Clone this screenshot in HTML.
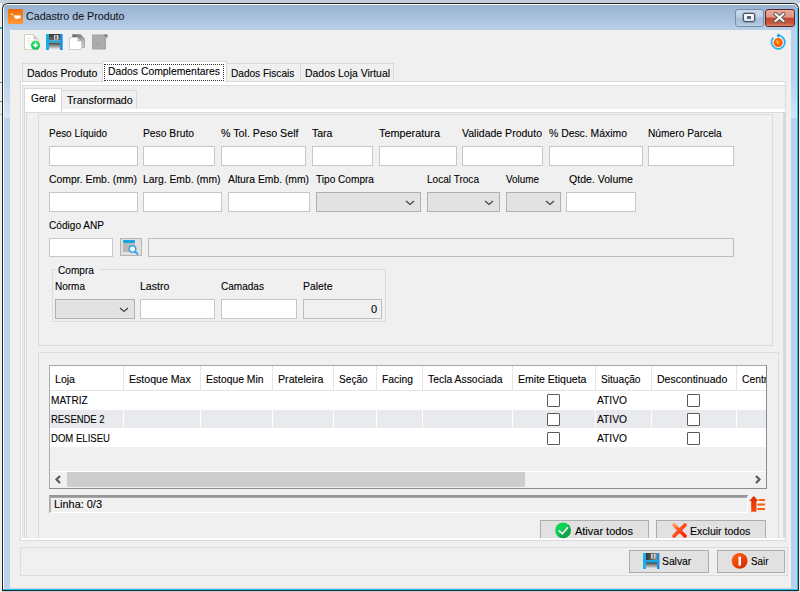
<!DOCTYPE html>
<html><head><meta charset="utf-8">
<style>
*{margin:0;padding:0;box-sizing:border-box}
html,body{width:800px;height:592px;overflow:hidden;background:#c3cfdb;font-family:"Liberation Sans",sans-serif;font-size:11px;color:#000}
.a{position:absolute}
.s{display:inline-block;transform-origin:0 0}
.lbl{position:absolute;white-space:nowrap;font-size:11px;line-height:13px;color:#000;-webkit-text-stroke:0.1px #000}
.ed{position:absolute;background:#fff;border:1px solid #c3c6cb}
.cb{position:absolute;background:#e2e2e2;border:1px solid #adb0b5}
.cb svg{position:absolute;right:5px;top:7px}
.dis{position:absolute;background:#f0f0f0;border:1px solid #bcbec2}
.btn{position:absolute;background:#e1e1e1;border:1px solid #adadad}
.tab{position:absolute;background:#f0f0f0;border:1px solid #d9d9d9;border-bottom:none}
.gb{position:absolute;border:1px solid #dcdcdc}
.hd{position:absolute;top:0;height:25px;-webkit-text-stroke:0.1px #000;border-right:1px solid #e5e5e5;padding-left:5px;line-height:26px;white-space:nowrap;overflow:hidden}
.row{position:absolute;left:0;width:716px;height:18px}
.ck{position:absolute;width:13px;height:13px;border:1.5px solid #5a5a5a;border-radius:1px;background:#fff}
</style></head><body>

<!-- left/right outside strips -->
<div class="a" style="left:0;top:0;width:2px;height:592px;background:#eef0f2"></div>
<div class="a" style="left:798px;top:0;width:2px;height:592px;background:#eef0f2"></div>
<div class="a" style="left:0;top:0;width:800px;height:3px;background:#c3cfdb"></div>

<!-- window frame -->
<div class="a" style="left:2px;top:3px;width:797px;height:588px;background:#262626;border-radius:6px 6px 0 0"></div>
<div class="a" style="left:3px;top:4px;width:795px;height:586px;background:#fff;border-radius:5px 5px 0 0"></div>
<div class="a" style="left:4px;top:5px;width:793px;height:584px;background:#b9d1ea;border-radius:4px 4px 0 0"></div><div class="a" style="left:4px;top:588px;width:793px;height:1px;background:#c9d0ea"></div>
<div class="a" style="left:4px;top:5px;width:793px;height:25px;background:linear-gradient(#97b1d0,#b8d0e8);border-radius:4px 4px 0 0"></div>
<div class="a" style="left:3px;top:589px;width:795px;height:1px;background:#1fc6f0"></div>
<div class="a" style="left:797px;top:8px;width:1px;height:582px;background:#1fc6f0"></div>

<div class="a" style="left:4px;top:80px;width:6px;height:38px;background:linear-gradient(#b9d1ea,#d6e4f3)"></div>
<div class="a" style="left:791px;top:80px;width:6px;height:38px;background:linear-gradient(#b9d1ea,#d6e4f3)"></div>
<div class="a" style="left:0;top:27px;width:2px;height:2px;background:#2ab0e0"></div>
<div class="a" style="left:0;top:82px;width:2px;height:1px;background:#888"></div>
<div class="a" style="left:0;top:101px;width:2px;height:1px;background:#888"></div>
<div class="a" style="left:0;top:114px;width:2px;height:1px;background:#bbb"></div>
<!-- title -->
<div class="a" style="left:8px;top:9px;width:15px;height:15px;background:linear-gradient(#f06c00,#ff9838);border-radius:1.5px"></div>
<svg class="a" style="left:8px;top:9px" width="15" height="15"><ellipse cx="3.8" cy="5.3" rx="1.2" ry="0.8" fill="#fff" opacity="0.85"/><path d="M5.2 6.2 L12.4 6.6 L13 8.6 L11.2 9.6 L8.2 9.9 L7.2 9.6 Z" fill="#fff"/></svg>
<div class="lbl" style="left:26px;top:9px;font-size:11.5px;line-height:14px;color:#1a1a2a"><span class="s" style="transform:scaleX(0.928)">Cadastro de Produto</span></div>

<!-- caption buttons -->
<div class="a" style="left:735px;top:9px;width:29px;height:18px;border:1px solid #7b8ba3;border-radius:3px;background:linear-gradient(#c8d9ed 0%,#bcd0e8 45%,#a6bdd9 50%,#b0c7e1 90%,#c5d7ec 100%)"></div>
<div class="a" style="left:743px;top:13px;width:12px;height:9px;border:1px solid #4a5060;border-radius:2px;background:linear-gradient(#fff,#dde4ee);box-shadow:0 0 0 1px rgba(80,90,110,.35)"></div><div class="a" style="left:747px;top:16px;width:4px;height:3px;background:#58647a"></div>
<div class="a" style="left:765px;top:9px;width:30px;height:18px;border:1px solid #5e2230;border-radius:3px;background:linear-gradient(#eaa898 0%,#e09484 45%,#c2472c 50%,#c85a40 85%,#dc8a74 100%)"></div>
<svg class="a" style="left:773px;top:12px" width="13" height="11"><path d="M2.5 2 L10.5 9 M10.5 2 L2.5 9" stroke="#555" stroke-width="4" stroke-linecap="round"/><path d="M2.5 2 L10.5 9 M10.5 2 L2.5 9" stroke="#f4f4f4" stroke-width="2.3" stroke-linecap="round"/></svg>

<!-- client -->
<div class="a" style="left:10px;top:30px;width:781px;height:558px;background:#f0f0f0"></div>

<!-- toolbar icons -->
<svg class="a" style="left:23px;top:33px" width="88" height="18">
<defs>
<linearGradient id="sv1" x1="0" y1="0" x2="0" y2="1"><stop offset="0" stop-color="#3a3a3a"/><stop offset="1" stop-color="#6a6a6a"/></linearGradient>
<linearGradient id="sv2" x1="0" y1="0" x2="0" y2="1"><stop offset="0" stop-color="#3c3c3c"/><stop offset="1" stop-color="#f0f0f0"/></linearGradient>
<linearGradient id="gr1" x1="0" y1="0" x2="0" y2="1"><stop offset="0" stop-color="#30e070"/><stop offset="1" stop-color="#10c050"/></linearGradient>
</defs>
<!-- new doc -->
<path d="M1.5 1.5 H10.5 L15.5 6.5 V16.5 H1.5 Z" fill="#fff" stroke="#d6d2b6" stroke-width="1"/>
<path d="M10.5 1.5 L15.5 6.5 H10.5 Z" fill="#cfcfcf"/>
<path d="M4 5 H8 M4 8 H11 M4 11 H8" stroke="#e4e4e4" stroke-width="1"/>
<circle cx="12.5" cy="12.2" r="4.6" fill="url(#gr1)"/>
<path d="M12.5 9.8 V14.6 M10.1 12.2 H14.9" stroke="#fff" stroke-width="1.6"/>
<!-- save -->
<rect x="26" y="1" width="11" height="6.5" fill="url(#sv1)"/>
<rect x="31" y="2" width="4.5" height="4.5" fill="#d8d8d8"/>
<rect x="32" y="2.5" width="2" height="3.5" fill="#777"/>
<rect x="26" y="9.5" width="11" height="7" fill="url(#sv2)"/>
<rect x="23" y="1" width="3" height="16" fill="#18aee6"/>
<rect x="37" y="1" width="2.6" height="16" fill="#168ee0"/>
<rect x="23" y="7.5" width="16.6" height="2" fill="#1aa6e6"/>
<!-- copy -->
<linearGradient id="cp" x1="0" y1="0" x2="1" y2="1"><stop offset="0" stop-color="#5e5e5e"/><stop offset="0.6" stop-color="#a8a8a8"/><stop offset="1" stop-color="#d4d4d4"/></linearGradient><path d="M49.5 1.5 H57.5 L61.5 5.5 V14.5 H49.5 Z" fill="url(#cp)" stroke="#8a8a8a" stroke-width="0.6"/>
<path d="M46.5 4.5 H54.5 L58.5 8.5 V16.5 H46.5 Z" fill="#fff" stroke="#cfcfcf" stroke-width="1"/>
<path d="M54.5 4.5 L58.5 8.5 H54.5 Z" fill="#bbb"/>
<!-- edit disabled -->
<rect x="69" y="1.5" width="14" height="15" fill="#a4a4a4"/>
<rect x="70" y="2.5" width="12" height="13" fill="#acacac"/>
<path d="M80 2 L83.5 1 L85 2.5 L84 5 Z" fill="#8a8a8a"/>
<path d="M74 9 L76 12" stroke="#959595" stroke-width="1"/>
</svg>

<!-- power icon -->
<svg class="a" style="left:769px;top:33px" width="18" height="18">
<defs><radialGradient id="org" cx="0.45" cy="0.4" r="0.6"><stop offset="0" stop-color="#ff8a10"/><stop offset="1" stop-color="#ff4a00"/></radialGradient></defs>
<path d="M4.3 4.6 A6.7 6.7 0 1 0 9.2 2.5" fill="none" stroke="#22b4ec" stroke-width="1.7"/>
<path d="M9.4 0.6 L11.6 2.6 L9.4 4.8 L7.6 2.6 Z" fill="#1a9ee4"/>
<circle cx="9.2" cy="9.5" r="4.5" fill="url(#org)"/>
<path d="M8 7 Q7.6 10 10 11" fill="none" stroke="#ffc040" stroke-width="1.1"/>
</svg>

<!-- main tabs -->
<div class="tab" style="left:22px;top:63px;width:81px;height:18px"></div>
<div class="lbl" style="left:27px;top:67px"><span class="s" style="transform:scaleX(0.959)">Dados Produto</span></div>
<div class="tab" style="left:226px;top:63px;width:75px;height:18px"></div>
<div class="lbl" style="left:231px;top:67px"><span class="s" style="transform:scaleX(0.916)">Dados Fiscais</span></div>
<div class="tab" style="left:300px;top:63px;width:94px;height:18px"></div>
<div class="lbl" style="left:305px;top:67px"><span class="s" style="transform:scaleX(0.948)">Dados Loja Virtual</span></div>

<!-- main panel -->
<div class="a" style="left:20px;top:81px;width:766px;height:460px;border:1px solid #d9d9d9;background:#fff"></div>
<div class="tab" style="left:102px;top:61px;width:125px;height:22px;background:#fff"></div>
<div class="a" style="left:104px;top:64px;width:120px;height:17px;border:1px dotted #333"></div>
<div class="lbl" style="left:108px;top:65px"><span class="s" style="transform:scaleX(0.944)">Dados Complementares</span></div>

<div class="a" style="left:22px;top:85px;width:763px;height:453px;border:1px solid #dcdcdc;border-right:none;border-bottom:none;background:#f0f0f0"></div>

<!-- inner tabs -->
<div class="a" style="left:24px;top:112px;width:761px;height:426px;border:1px solid #dadada;border-bottom:none;background:#f0f0f0"></div>
<div class="a" style="left:24px;top:109px;width:761px;height:3px;background:#fff;border-left:1px solid #dadada"></div>
<div class="tab" style="left:61px;top:90px;width:76px;height:19px"></div>
<div class="lbl" style="left:67px;top:94px"><span class="s" style="transform:scaleX(0.965)">Transformado</span></div>
<div class="tab" style="left:24px;top:88px;width:38px;height:24px;background:#fff"></div>
<div class="lbl" style="left:31px;top:92px"><span class="s" style="transform:scaleX(0.922)">Geral</span></div>

<div class="a" style="left:26px;top:112px;width:758px;height:426px;border:1px solid #dadada;border-bottom:none;background:#f0f0f0"></div>

<!-- group 1 -->
<div class="gb" style="left:38px;top:114px;width:735px;height:232px"></div>

<div class="lbl" style="left:49px;top:127px"><span class="s" style="transform:scaleX(0.903)">Peso Líquido</span></div>
<div class="lbl" style="left:143px;top:127px"><span class="s" style="transform:scaleX(0.937)">Peso Bruto</span></div>
<div class="lbl" style="left:221px;top:127px"><span class="s" style="transform:scaleX(0.970)">% Tol. Peso Self</span></div>
<div class="lbl" style="left:312px;top:127px"><span class="s" style="transform:scaleX(0.957)">Tara</span></div>
<div class="lbl" style="left:379px;top:127px"><span class="s" style="transform:scaleX(0.988)">Temperatura</span></div>
<div class="lbl" style="left:462px;top:127px"><span class="s" style="transform:scaleX(0.957)">Validade Produto</span></div>
<div class="lbl" style="left:549px;top:127px"><span class="s" style="transform:scaleX(0.945)">% Desc. Máximo</span></div>
<div class="lbl" style="left:648px;top:127px"><span class="s" style="transform:scaleX(0.928)">Número Parcela</span></div>

<div class="ed" style="left:49px;top:146px;width:89px;height:20px"></div>
<div class="ed" style="left:143px;top:146px;width:72px;height:20px"></div>
<div class="ed" style="left:221px;top:146px;width:85px;height:20px"></div>
<div class="ed" style="left:312px;top:146px;width:61px;height:20px"></div>
<div class="ed" style="left:379px;top:146px;width:78px;height:20px"></div>
<div class="ed" style="left:462px;top:146px;width:81px;height:20px"></div>
<div class="ed" style="left:549px;top:146px;width:94px;height:20px"></div>
<div class="ed" style="left:648px;top:146px;width:86px;height:20px"></div>

<div class="lbl" style="left:49px;top:173px"><span class="s" style="transform:scaleX(0.947)">Compr. Emb. (mm)</span></div>
<div class="lbl" style="left:143px;top:173px"><span class="s" style="transform:scaleX(0.939)">Larg. Emb. (mm)</span></div>
<div class="lbl" style="left:228px;top:173px"><span class="s" style="transform:scaleX(0.940)">Altura Emb. (mm)</span></div>
<div class="lbl" style="left:316px;top:173px"><span class="s" style="transform:scaleX(0.918)">Tipo Compra</span></div>
<div class="lbl" style="left:427px;top:173px"><span class="s" style="transform:scaleX(0.914)">Local Troca</span></div>
<div class="lbl" style="left:506px;top:173px"><span class="s" style="transform:scaleX(0.899)">Volume</span></div>
<div class="lbl" style="left:569px;top:173px"><span class="s" style="transform:scaleX(0.960)">Qtde. Volume</span></div>

<div class="ed" style="left:49px;top:192px;width:89px;height:20px"></div>
<div class="ed" style="left:143px;top:192px;width:79px;height:20px"></div>
<div class="ed" style="left:228px;top:192px;width:82px;height:20px"></div>
<div class="cb" style="left:316px;top:192px;width:105px;height:20px"><svg width="10" height="6"><path d="M1 1 L5 4.5 L9 1" fill="none" stroke="#444" stroke-width="1.2"/></svg></div>
<div class="cb" style="left:427px;top:192px;width:73px;height:20px"><svg width="10" height="6"><path d="M1 1 L5 4.5 L9 1" fill="none" stroke="#444" stroke-width="1.2"/></svg></div>
<div class="cb" style="left:506px;top:192px;width:55px;height:20px"><svg width="10" height="6"><path d="M1 1 L5 4.5 L9 1" fill="none" stroke="#444" stroke-width="1.2"/></svg></div>
<div class="ed" style="left:566px;top:192px;width:70px;height:20px"></div>

<div class="lbl" style="left:49px;top:219px"><span class="s" style="transform:scaleX(0.918)">Código ANP</span></div>
<div class="ed" style="left:49px;top:238px;width:64px;height:19px"></div>
<div class="btn" style="left:120px;top:238px;width:22px;height:18px;background:#e1e1e1;border-color:#b4b4b4"></div>
<svg class="a" style="left:121px;top:239px" width="20" height="18">
<rect x="2" y="1" width="12" height="3" rx="1" fill="#14a4e4"/>
<rect x="2" y="4" width="12" height="9" fill="#b8b8b8"/>
<circle cx="11.5" cy="10" r="3.3" fill="#fff" stroke="#3aa6e6" stroke-width="1.6"/>
<path d="M14 12.5 L17 15.5" stroke="#3aa6e6" stroke-width="2"/>
</svg>
<div class="dis" style="left:148px;top:238px;width:586px;height:19px"></div>

<!-- compra group -->
<div class="gb" style="left:52px;top:269px;width:334px;height:53px"></div>
<div class="lbl" style="left:56px;top:264px;background:#f0f0f0;padding:0 2px"><span class="s" style="transform:scaleX(0.920)">Compra</span></div>
<div class="lbl" style="left:55px;top:280px"><span class="s" style="transform:scaleX(0.909)">Norma</span></div>
<div class="lbl" style="left:140px;top:280px"><span class="s" style="transform:scaleX(0.957)">Lastro</span></div>
<div class="lbl" style="left:221px;top:280px"><span class="s" style="transform:scaleX(0.913)">Camadas</span></div>
<div class="lbl" style="left:303px;top:280px"><span class="s" style="transform:scaleX(0.946)">Palete</span></div>
<div class="cb" style="left:55px;top:299px;width:80px;height:20px"><svg width="10" height="6"><path d="M1 1 L5 4.5 L9 1" fill="none" stroke="#444" stroke-width="1.2"/></svg></div>
<div class="ed" style="left:140px;top:299px;width:75px;height:20px"></div>
<div class="ed" style="left:221px;top:299px;width:76px;height:20px"></div>
<div class="dis" style="left:303px;top:299px;width:79px;height:20px"><div class="lbl" style="right:4px;top:3px"><span class="s" style="transform:scaleX(1.000)">0</span></div></div>

<!-- group 2 -->
<div class="gb" style="left:38px;top:352px;width:741px;height:186px;border-bottom:none"></div>

<!-- grid -->
<div class="a" style="left:49px;top:365px;width:718px;height:124px;border:1px solid #868a92;border-top-color:#a3a7ae;border-left-color:#a9adb4;background:#f0f0f0;overflow:hidden">
  <div class="a" style="left:0;top:0;width:716px;height:25px;background:#fff;border-bottom:1px solid #e5e5e5">
    <div class="hd" style="left:0;width:74px"><span class="s" style="transform:scaleX(0.962)">Loja</span></div>
    <div class="hd" style="left:74px;width:77px"><span class="s" style="transform:scaleX(0.962)">Estoque Max</span></div>
    <div class="hd" style="left:151px;width:72px"><span class="s" style="transform:scaleX(0.940)">Estoque Min</span></div>
    <div class="hd" style="left:223px;width:61px"><span class="s" style="transform:scaleX(0.966)">Prateleira</span></div>
    <div class="hd" style="left:284px;width:43px"><span class="s" style="transform:scaleX(0.921)">Seção</span></div>
    <div class="hd" style="left:327px;width:46px"><span class="s" style="transform:scaleX(0.939)">Facing</span></div>
    <div class="hd" style="left:373px;width:90px"><span class="s" style="transform:scaleX(0.944)">Tecla Associada</span></div>
    <div class="hd" style="left:463px;width:83px"><span class="s" style="transform:scaleX(0.957)">Emite Etiqueta</span></div>
    <div class="hd" style="left:546px;width:56px"><span class="s" style="transform:scaleX(0.923)">Situação</span></div>
    <div class="hd" style="left:602px;width:85px"><span class="s" style="transform:scaleX(0.957)">Descontinuado</span></div>
    <div class="hd" style="left:687px;width:60px;border:none"><span class="s" style="transform:scaleX(0.940)">Centro</span></div>
  </div>
  <div class="row" style="top:25px;height:19px;background:#fff"></div>
  <div class="row" style="top:44px;background:#e9eaee"></div>
  <div class="row" style="top:62px;height:19px;background:#fff"></div><div class="a" style="left:73px;top:44px;width:1px;height:18px;background:#fff"></div><div class="a" style="left:150px;top:44px;width:1px;height:18px;background:#fff"></div><div class="a" style="left:222px;top:44px;width:1px;height:18px;background:#fff"></div><div class="a" style="left:283px;top:44px;width:1px;height:18px;background:#fff"></div><div class="a" style="left:326px;top:44px;width:1px;height:18px;background:#fff"></div><div class="a" style="left:372px;top:44px;width:1px;height:18px;background:#fff"></div><div class="a" style="left:462px;top:44px;width:1px;height:18px;background:#fff"></div><div class="a" style="left:545px;top:44px;width:1px;height:18px;background:#fff"></div><div class="a" style="left:601px;top:44px;width:1px;height:18px;background:#fff"></div><div class="a" style="left:686px;top:44px;width:1px;height:18px;background:#fff"></div>
  <div class="lbl" style="left:1px;top:28px"><span class="s" style="transform:scaleX(0.916)">MATRIZ</span></div>
  <div class="lbl" style="left:1px;top:47px"><span class="s" style="transform:scaleX(0.858)">RESENDE 2</span></div>
  <div class="lbl" style="left:1px;top:66px"><span class="s" style="transform:scaleX(0.869)">DOM ELISEU</span></div>
  <div class="lbl" style="left:547px;top:28px"><span class="s" style="transform:scaleX(0.932)">ATIVO</span></div>
  <div class="lbl" style="left:547px;top:47px"><span class="s" style="transform:scaleX(0.932)">ATIVO</span></div>
  <div class="lbl" style="left:547px;top:66px"><span class="s" style="transform:scaleX(0.932)">ATIVO</span></div>
  <div class="ck" style="left:497px;top:28px"></div>
  <div class="ck" style="left:497px;top:47px"></div>
  <div class="ck" style="left:497px;top:66px"></div>
  <div class="ck" style="left:637px;top:28px"></div>
  <div class="ck" style="left:637px;top:47px"></div>
  <div class="ck" style="left:637px;top:66px"></div>
  <!-- scrollbar -->
  <div class="a" style="left:0;top:105px;width:716px;height:17px;background:#f0f0f0;border-top:1px solid #fff"></div>
  <div class="a" style="left:17px;top:106px;width:458px;height:15px;background:#cdcdcd"></div>
  <svg class="a" style="left:4px;top:109px" width="8" height="9"><path d="M6 1 L2.5 4.5 L6 8" fill="none" stroke="#5a5a5a" stroke-width="2.2"/></svg>
  <svg class="a" style="left:704px;top:109px" width="8" height="9"><path d="M2 1 L5.5 4.5 L2 8" fill="none" stroke="#5a5a5a" stroke-width="2.2"/></svg>
</div>

<!-- status -->
<div class="a" style="left:49px;top:495px;width:699px;height:18px;border-top:2px solid #8c8c8c;border-top-color:#959595;border-left:2px solid #b0b0b0;border-bottom:1px solid #fff;border-right:1px solid #fff;background:#f0f0f0;box-shadow:inset 0 1px 0 #a8a8a8"></div>
<div class="lbl" style="left:54px;top:498px"><span class="s" style="transform:scaleX(0.993)">Linha: 0/3</span></div>
<svg class="a" style="left:748px;top:495px" width="18" height="18">
<defs><linearGradient id="ag" x1="0" y1="0" x2="0" y2="1"><stop offset="0" stop-color="#d42c00"/><stop offset="1" stop-color="#ff4a08"/></linearGradient></defs>
<path d="M1.2 5.9 L5.8 0.9 L10.4 5.9 L8.4 5.9 L8.4 16.7 L3.2 16.7 L3.2 5.9 Z" fill="url(#ag)"/>
<rect x="10.6" y="3.9" width="6.6" height="2.1" rx="1" fill="#ff5a0a"/>
<rect x="9.2" y="8.5" width="8" height="2.1" rx="1" fill="#ff5a0a"/>
<rect x="9.2" y="12.9" width="8" height="2.1" rx="1" fill="#ff5a0a"/>
</svg>

<!-- action buttons -->
<div class="a" style="left:540px;top:520px;width:109px;height:18px;background:#e1e1e1;border:1px solid #adadad;border-bottom:none"></div>
<svg class="a" style="left:555px;top:522px" width="17" height="17"><defs><linearGradient id="ck" x1="0" y1="0" x2="1" y2="1"><stop offset="0" stop-color="#10d858"/><stop offset="0.5" stop-color="#08d050"/><stop offset="0.5" stop-color="#0ab048"/><stop offset="1" stop-color="#0a9a40"/></linearGradient></defs><circle cx="8.1" cy="8.4" r="7.9" fill="url(#ck)"/><path d="M4.2 8.9 L7.3 11.7 L12.6 5.6" fill="none" stroke="#f8e8f4" stroke-width="1.7" stroke-linecap="round"/></svg>
<div class="lbl" style="left:575px;top:525px"><span class="s" style="transform:scaleX(0.998)">Ativar todos</span></div>
<div class="a" style="left:656px;top:520px;width:110px;height:18px;background:#e1e1e1;border:1px solid #adadad;border-bottom:none"></div>
<svg class="a" style="left:671px;top:522px" width="17" height="17"><defs><linearGradient id="xg" x1="0" y1="0" x2="1" y2="1"><stop offset="0" stop-color="#ff9a60"/><stop offset="0.35" stop-color="#ff5a20"/><stop offset="1" stop-color="#ff1a00"/></linearGradient></defs><path d="M3 3 L14 14 M14 3 L3 14" stroke="url(#xg)" stroke-width="3.6" stroke-linecap="round"/></svg>
<div class="lbl" style="left:690px;top:525px"><span class="s" style="transform:scaleX(0.957)">Excluir todos</span></div>

<!-- bottom panel -->
<div class="a" style="left:20px;top:547px;width:768px;height:29px;border:1px solid #dcdcdc"></div>
<div class="btn" style="left:629px;top:550px;width:80px;height:23px"></div>
<svg class="a" style="left:642px;top:552px" width="18" height="18">
<defs>
<linearGradient id="sv3" x1="0" y1="0" x2="1" y2="0"><stop offset="0" stop-color="#333"/><stop offset="1" stop-color="#888"/></linearGradient>
<linearGradient id="sv4" x1="0" y1="0" x2="0" y2="1"><stop offset="0" stop-color="#3c3c3c"/><stop offset="1" stop-color="#f0f0f0"/></linearGradient>
</defs>
<rect x="4" y="1" width="11" height="7" fill="url(#sv3)"/>
<rect x="9" y="2" width="4.5" height="4.5" fill="#d8d8d8"/>
<rect x="10.5" y="2.5" width="1.6" height="3.5" fill="#777"/>
<rect x="4" y="10" width="11" height="7" fill="url(#sv4)"/>
<rect x="1" y="1" width="3" height="16" fill="#18b4e8"/>
<rect x="15" y="1" width="2.4" height="16" fill="#168ee0"/>
<rect x="1" y="8" width="16.4" height="2.4" fill="#1aa6e6"/>
</svg>
<div class="lbl" style="left:662px;top:555px"><span class="s" style="transform:scaleX(0.938)">Salvar</span></div>
<div class="btn" style="left:717px;top:550px;width:68px;height:23px"></div>
<svg class="a" style="left:731px;top:552px" width="18" height="18">
<defs><linearGradient id="rd" x1="0" y1="0" x2="1" y2="1"><stop offset="0" stop-color="#ff6a14"/><stop offset="1" stop-color="#d81e00"/></linearGradient></defs>
<circle cx="8.6" cy="8.9" r="7.9" fill="url(#rd)"/><rect x="7.5" y="4.6" width="2.5" height="9" fill="#fff"/></svg>
<div class="lbl" style="left:751px;top:555px"><span class="s" style="transform:scaleX(0.895)">Sair</span></div>

</body></html>
